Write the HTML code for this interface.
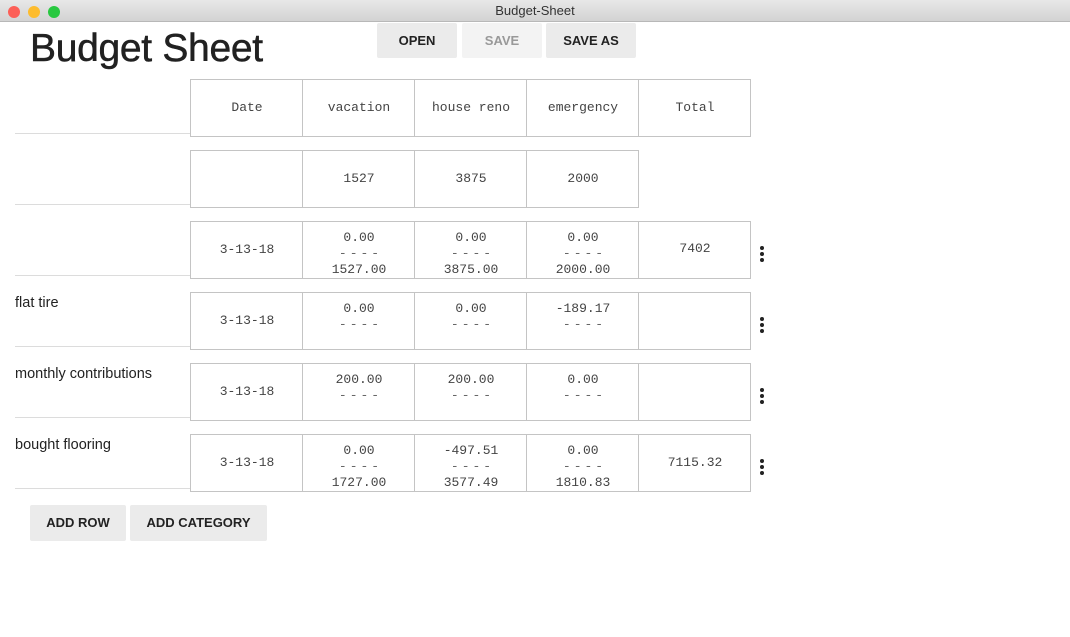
<!DOCTYPE html>
<html><head><meta charset="utf-8"><style>
*{margin:0;padding:0;box-sizing:border-box}
body{width:1070px;height:637px;background:#fff;position:relative;overflow:hidden;font-family:"Liberation Sans",sans-serif}
.tb{position:absolute;left:0;top:0;width:1070px;height:22px;background:linear-gradient(#e8e8e8,#d3d3d3);border-bottom:1px solid #b8b8b8;text-align:center;font-size:13px;line-height:22px;color:#333}
.l{position:absolute;top:6px;width:12px;height:12px;border-radius:50%}
h1{position:absolute;left:30px;top:27px;font-size:39px;font-weight:normal;color:#212121;letter-spacing:-0.3px;-webkit-text-stroke:0.5px #212121}
.b{position:absolute;background:#ebebeb;border-radius:2px;font-size:13px;font-weight:bold;color:#222;text-align:center;line-height:35px;height:35px}
.c{position:absolute;width:113px;height:58px;border:1px solid #c4c4c4;font-family:"Liberation Mono",monospace;font-size:13px;color:#444;display:flex;align-items:center;justify-content:center;text-align:center;line-height:16px;padding-left:1px}
.c.t{display:block;padding-top:8px}
.d{color:#666;letter-spacing:3px;margin-right:-3px}
.sep{position:absolute;left:15px;width:175px;height:1px;background:#dcdcdc}
.lab{position:absolute;left:15px;font-size:14.5px;color:#222}
.dots{position:absolute;left:760px;width:4px}
.dots i{display:block;width:4px;height:4px;border-radius:50%;background:#222;margin-bottom:2px}
</style></head><body>
<div class="tb">Budget-Sheet</div>
<div class="l" style="left:8px;background:#fc5f57"></div>
<div class="l" style="left:28px;background:#fdbc2e"></div>
<div class="l" style="left:48px;background:#28c840"></div>
<h1>Budget Sheet</h1>
<div class="b" style="left:377px;top:23px;width:80px">OPEN</div>
<div class="b" style="left:462px;top:23px;width:80px;background:#f3f3f3;color:#999">SAVE</div>
<div class="b" style="left:546px;top:23px;width:90px">SAVE AS</div>

<div class="sep" style="top:133px"></div>
<div class="sep" style="top:204px"></div>
<div class="sep" style="top:275px"></div>
<div class="sep" style="top:346px"></div>
<div class="sep" style="top:417px"></div>
<div class="sep" style="top:488px"></div>
<div class="lab" style="top:295px">flat tire</div>
<div class="lab" style="top:366px">monthly contributions</div>
<div class="lab" style="top:437px">bought flooring</div>

<div class="c" style="left:190px;top:79px">Date</div>
<div class="c" style="left:302px;top:79px">vacation</div>
<div class="c" style="left:414px;top:79px">house reno</div>
<div class="c" style="left:526px;top:79px">emergency</div>
<div class="c" style="left:638px;top:79px">Total</div>

<div class="c" style="left:190px;top:150px"></div>
<div class="c" style="left:302px;top:150px">1527</div>
<div class="c" style="left:414px;top:150px">3875</div>
<div class="c" style="left:526px;top:150px">2000</div>

<div class="c" style="left:190px;top:221px">3-13-18</div>
<div class="c t" style="left:302px;top:221px">0.00<br><span class="d">----</span><br>1527.00</div>
<div class="c t" style="left:414px;top:221px">0.00<br><span class="d">----</span><br>3875.00</div>
<div class="c t" style="left:526px;top:221px">0.00<br><span class="d">----</span><br>2000.00</div>
<div class="c t" style="left:638px;top:221px;padding-top:19px">7402</div>
<div class="dots" style="top:246px"><i></i><i></i><i></i></div>

<div class="c" style="left:190px;top:292px">3-13-18</div>
<div class="c t" style="left:302px;top:292px">0.00<br><span class="d">----</span></div>
<div class="c t" style="left:414px;top:292px">0.00<br><span class="d">----</span></div>
<div class="c t" style="left:526px;top:292px">-189.17<br><span class="d">----</span></div>
<div class="c" style="left:638px;top:292px"></div>
<div class="dots" style="top:317px"><i></i><i></i><i></i></div>

<div class="c" style="left:190px;top:363px">3-13-18</div>
<div class="c t" style="left:302px;top:363px">200.00<br><span class="d">----</span></div>
<div class="c t" style="left:414px;top:363px">200.00<br><span class="d">----</span></div>
<div class="c t" style="left:526px;top:363px">0.00<br><span class="d">----</span></div>
<div class="c" style="left:638px;top:363px"></div>
<div class="dots" style="top:388px"><i></i><i></i><i></i></div>

<div class="c" style="left:190px;top:434px">3-13-18</div>
<div class="c t" style="left:302px;top:434px">0.00<br><span class="d">----</span><br>1727.00</div>
<div class="c t" style="left:414px;top:434px">-497.51<br><span class="d">----</span><br>3577.49</div>
<div class="c t" style="left:526px;top:434px">0.00<br><span class="d">----</span><br>1810.83</div>
<div class="c t" style="left:638px;top:434px;padding-top:20px">7115.32</div>
<div class="dots" style="top:459px"><i></i><i></i><i></i></div>

<div class="b" style="left:30px;top:505px;width:96px;height:36px;line-height:36px">ADD ROW</div>
<div class="b" style="left:130px;top:505px;width:137px;height:36px;line-height:36px">ADD CATEGORY</div>
</body></html>
